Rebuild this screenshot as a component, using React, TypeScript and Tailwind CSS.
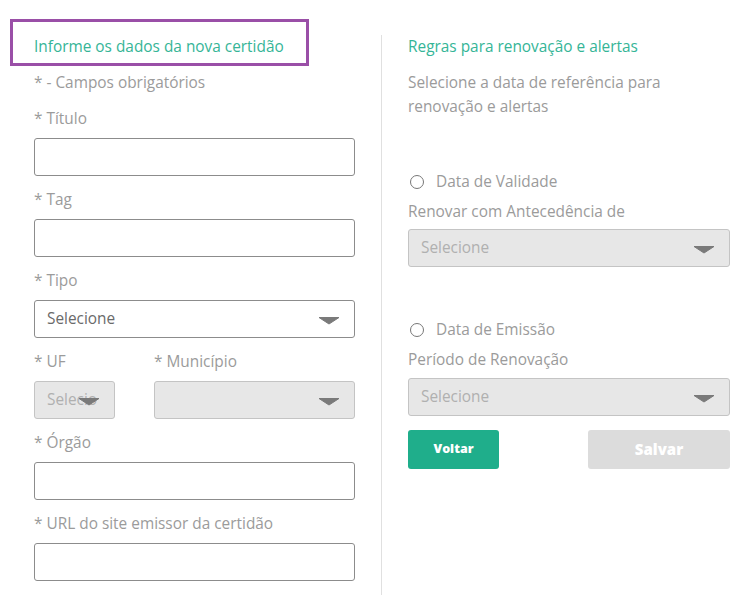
import React from 'react';

const Caret = () => (
  <svg width="22" height="9" viewBox="0 0 22 9" className="shrink-0">
    <path d="M1 1.5 L21 1.5 L11 8 Z" fill="#7a7a7a" stroke="#7a7a7a" strokeWidth="1" strokeLinejoin="round" />
  </svg>
);

const Label = ({ children }: { children: React.ReactNode }) => (
  <div className="h-5 leading-5 text-[15.4px] text-[#9b9b9b] mb-[9px] whitespace-nowrap">{children}</div>
);

const TextInput = () => (
  <div className="h-[38px] rounded-[3px] border border-[#8c8c8c] bg-white mb-[14px]" />
);

const Select = ({
  text,
  disabled,
  className = '',
}: {
  text?: string;
  disabled?: boolean;
  className?: string;
}) => (
  <div
    className={`relative h-[38px] rounded-[3px] border flex items-center pl-[12px] pr-[14px] overflow-hidden ${
      disabled ? 'bg-[#e7e7e7] border-[#c4c4c4] text-[#b0b0b0]' : 'bg-white border-[#8c8c8c] text-[#6a6a6a]'
    } ${className}`}
  >
    <span className="text-[15.4px] whitespace-nowrap">{text}</span>
    <div className="absolute right-[14px] top-[15px]">
      <Caret />
    </div>
  </div>
);

const Radio = ({ label }: { label: string }) => (
  <div className="h-5 flex items-center text-[15.4px] text-[#9b9b9b]">
    <span className="ml-[2px] w-[14px] h-[14px] rounded-full border-[1.5px] border-[#777]" />
    <span className="ml-[12px]">{label}</span>
  </div>
);

export default function App() {
  return (
    <div
      className="relative w-[744px] h-[608px] bg-white overflow-hidden"
      style={{ fontFamily: '"Open Sans", "Noto Sans", sans-serif' }}
    >
      <div className="flex pt-[37px]">
        {/* left column */}
        <div className="w-[381px] pl-[34px] pr-[26px]">
          <div className="h-5 leading-5 text-[15.4px] text-[#35b597] whitespace-nowrap">
            Informe os dados da nova certidão
          </div>
          <div className="h-5 leading-5 text-[15.4px] text-[#9b9b9b] mt-[16px]">* - Campos obrigatórios</div>
          <div className="mt-[16px]">
            <Label>* Título</Label>
            <TextInput />
            <Label>* Tag</Label>
            <TextInput />
            <Label>* Tipo</Label>
            <div className="mb-[14px]">
              <Select text="Selecione" />
            </div>
            <div className="flex gap-[39px]">
              <div className="w-[81px]">
                <Label>* UF</Label>
                <Select text="Selecio" disabled />
              </div>
              <div className="flex-1">
                <Label>* Município</Label>
                <Select disabled />
              </div>
            </div>
            <div className="mt-[14px]">
              <Label>* Órgão</Label>
              <TextInput />
              <Label>* URL do site emissor da certidão</Label>
              <TextInput />
            </div>
          </div>
        </div>

        {/* divider */}
        <div className="w-px bg-[#e0e0e0] -mt-[2px] h-[560px]" />

        {/* right column */}
        <div className="w-[322px] ml-[26px]">
          <div className="h-5 leading-5 text-[15.4px] text-[#35b597]">Regras para renovação e alertas</div>
          <div className="text-[15.4px] leading-6 text-[#9b9b9b] mt-[14px] w-[270px]">
            Selecione a data de referência para renovação e alertas
          </div>
          <div className="mt-[53px]">
            <Radio label="Data de Validade" />
          </div>
          <div className="h-5 leading-5 text-[15.4px] text-[#9b9b9b] mt-[10px] mb-[7px]">Renovar com Antecedência de</div>
          <Select text="Selecione" disabled />
          <div className="mt-[53px]">
            <Radio label="Data de Emissão" />
          </div>
          <div className="h-5 leading-5 text-[15.4px] text-[#9b9b9b] mt-[10px] mb-[8px]">Período de Renovação</div>
          <Select text="Selecione" disabled />
          <div className="flex justify-between mt-[14px]">
            <button className="w-[91px] h-[39px] rounded-[3px] bg-[#1fae8b] text-white text-[12.5px] font-extrabold">
              Voltar
            </button>
            <button className="w-[142px] h-[39px] rounded-[3px] bg-[#dcdcdc] text-white text-[15px] font-extrabold">
              Salvar
            </button>
          </div>
        </div>
      </div>

      {/* highlight annotation */}
      <div className="absolute left-[10px] top-[19px] w-[299px] h-[47px] border-[3px] border-[#9a4fa7] pointer-events-none" />
    </div>
  );
}
